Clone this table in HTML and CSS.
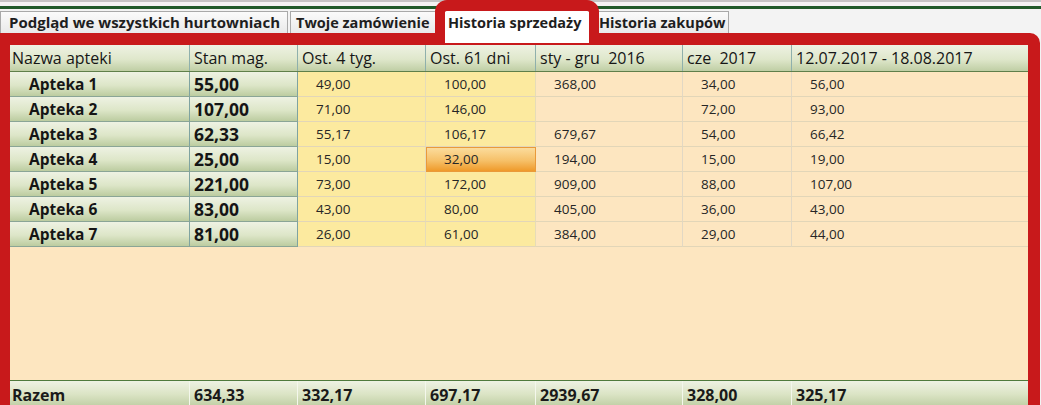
FILE: index.html
```html
<!DOCTYPE html>
<html lang="pl">
<head>
<meta charset="utf-8">
<title>Historia sprzedaży</title>
<link rel="stylesheet" href="styles.css">
</head>
<body>
<div class="topbar"><div class="topbar-grey"></div><div class="topbar-green"></div></div>
<div class="tabs">
  <div class="tab tab-1">Podgląd we wszystkich hurtowniach</div>
  <div class="tab tab-2">Twoje zamówienie</div>
  <div class="tab tab-active">Historia sprzedaży</div>
  <div class="tab tab-4">Historia zakupów</div>
</div>
<div class="frame">
  <div class="grid">
    <div class="row head">
      <div class="cell">Nazwa apteki</div>
      <div class="cell">Stan mag.</div>
      <div class="cell">Ost. 4 tyg.</div>
      <div class="cell">Ost. 61 dni</div>
      <div class="cell">sty - gru  2016</div>
      <div class="cell">cze  2017</div>
      <div class="cell">12.07.2017 - 18.08.2017</div>
    </div>
    <div class="row data">
      <div class="cell name">Apteka 1</div><div class="cell stock">55,00</div>
      <div class="cell y">49,00</div><div class="cell y">100,00</div>
      <div class="cell p">368,00</div><div class="cell p">34,00</div><div class="cell p">56,00</div>
    </div>
    <div class="row data">
      <div class="cell name">Apteka 2</div><div class="cell stock">107,00</div>
      <div class="cell y">71,00</div><div class="cell y">146,00</div>
      <div class="cell p"></div><div class="cell p">72,00</div><div class="cell p">93,00</div>
    </div>
    <div class="row data">
      <div class="cell name">Apteka 3</div><div class="cell stock">62,33</div>
      <div class="cell y">55,17</div><div class="cell y">106,17</div>
      <div class="cell p">679,67</div><div class="cell p">54,00</div><div class="cell p">66,42</div>
    </div>
    <div class="row data">
      <div class="cell name">Apteka 4</div><div class="cell stock">25,00</div>
      <div class="cell y">15,00</div><div class="cell y hot">32,00</div>
      <div class="cell p">194,00</div><div class="cell p">15,00</div><div class="cell p">19,00</div>
    </div>
    <div class="row data">
      <div class="cell name">Apteka 5</div><div class="cell stock">221,00</div>
      <div class="cell y">73,00</div><div class="cell y">172,00</div>
      <div class="cell p">909,00</div><div class="cell p">88,00</div><div class="cell p">107,00</div>
    </div>
    <div class="row data">
      <div class="cell name">Apteka 6</div><div class="cell stock">83,00</div>
      <div class="cell y">43,00</div><div class="cell y">80,00</div>
      <div class="cell p">405,00</div><div class="cell p">36,00</div><div class="cell p">43,00</div>
    </div>
    <div class="row data">
      <div class="cell name">Apteka 7</div><div class="cell stock">81,00</div>
      <div class="cell y">26,00</div><div class="cell y">61,00</div>
      <div class="cell p">384,00</div><div class="cell p">29,00</div><div class="cell p">44,00</div>
    </div>
    <div class="filler"></div>
    <div class="row foot">
      <div class="cell">Razem</div>
      <div class="cell">634,33</div>
      <div class="cell">332,17</div>
      <div class="cell">697,17</div>
      <div class="cell">2939,67</div>
      <div class="cell">328,00</div>
      <div class="cell">325,17</div>
    </div>
  </div>
</div>
</body>
</html>
```

FILE: styles.css
```css
html, body {
  margin: 0;
  padding: 0;
  overflow: hidden;
}
body {
  background: #f3f3f3;
  font-family: "Open Sans", "Lato", "Liberation Sans", sans-serif;
  color: #1c1c1c;
  width: 1041px;
  height: 405px;
}
.topbar {
  height: 11px;
  display: flex;
  flex-direction: column;
}
.topbar-grey {
  height: 2px;
  background: #c4c4c4;
  margin-bottom: 4px;
}
.topbar-green {
  height: 3px;
  background: #1f5a2a;
}
.tabs {
  display: flex;
  height: 22px;
  align-items: stretch;
}
.tab {
  box-sizing: border-box;
  border: 1px solid #a9a9a9;
  border-bottom: none;
  background: linear-gradient(#fbfbfb, #e9e9e9);
  font-weight: 700;
  font-size: 14.5px;
  line-height: 21px;
  white-space: nowrap;
  overflow: hidden;
  color: #1e1e1e;
}
.tab-1 {
  width: 288px;
  padding-left: 8px;
  font-size: 15px;
}
.tab-2 {
  width: 146px;
  margin-left: 2px;
  padding-left: 5px;
}
.tab-active {
  position: relative;
  z-index: 2;
  width: 164px;
  height: 43px;
  margin-top: -11px;
  margin-left: -1px;
  border: 10px solid #c8191b;
  border-top-width: 11px;
  border-bottom: none;
  border-radius: 12px 12px 0 0;
  background: #ffffff;
  padding: 2px 0 0 3px;
  line-height: 20px;
}
.tab-4 {
  width: 131px;
  margin-left: -1px;
  padding-left: 0;
}
.frame {
  box-sizing: border-box;
  width: 1040px;
  height: 380px;
  border: 12px solid #c8191b;
  border-left-width: 10px;
  border-bottom-width: 8px;
  border-radius: 0 10px 0 0;
  background: #c8191b;
  position: relative;
  z-index: 1;
}
.grid {
  display: flex;
  flex-direction: column;
  height: 100%;
  background: #fde6c0;
}
.row {
  display: grid;
  grid-template-columns: 180px 108px 128px 110px 147px 109px 1fr;
}
.cell {
  box-sizing: border-box;
  white-space: pre;
  overflow: hidden;
}
.head {
  height: 26px;
  background: linear-gradient(#eef2e3, #dfe7cb 55%, #bfcea4);
  border-bottom: 1px solid #5f7f4a;
}
.head .cell {
  font-size: 16px;
  line-height: 26px;
  padding-left: 4px;
  border-right: 1px solid #8fb0ac;
  font-weight: 500;
  color: #161616;
}
.head .cell:first-child {
  padding-left: 2px;
}
.head .cell:last-child {
  border-right: none;
}
.data {
  height: 25px;
}
.data .cell {
  line-height: 24px;
  border-bottom: 1px solid #e2d6b8;
  border-right: 1px solid #e2d8c4;
  font-size: 13.5px;
  padding-left: 18px;
  color: #262626;
}
.data .name,
.data .stock {
  background: linear-gradient(#eef2e3, #dde6c8 55%, #bccca0);
  border-bottom: 1px solid #8aa596;
  font-weight: 700;
  font-size: 15.5px;
  color: #151515;
}
.data .name {
  padding-left: 19px;
  border-right: 1px solid #7fa3a0;
}
.data .stock {
  padding-left: 4px;
  font-size: 17.5px;
  border-right: 1px solid #7fa3a0;
}
.data .y {
  background: #fcea9f;
  border-right-color: #e6dcb8;
}
.data .p {
  background: #fde6c0;
}
.data .cell:last-child {
  border-right: none;
}
.data .hot {
  background: linear-gradient(#fbdc9c, #f6c068 55%, #ef9a2a);
  border: 1px solid #e99a3a;
  padding-left: 17px;
  line-height: 23px;
}
.filler {
  flex: 1;
  background: #fde6c0;
}
.foot {
  height: 24px;
  background: linear-gradient(#eef2e3, #dbe4c5 55%, #c3d1a8);
  border-top: 1px solid #4f7a3c;
}
.foot .cell {
  font-size: 16px;
  font-weight: 700;
  line-height: 28px;
  padding-left: 4px;
  border-right: 1px solid #f4f7ec;
  color: #1a1a1a;
}
.foot .cell:first-child {
  padding-left: 2px;
}
.foot .cell:last-child {
  border-right: none;
}
```
